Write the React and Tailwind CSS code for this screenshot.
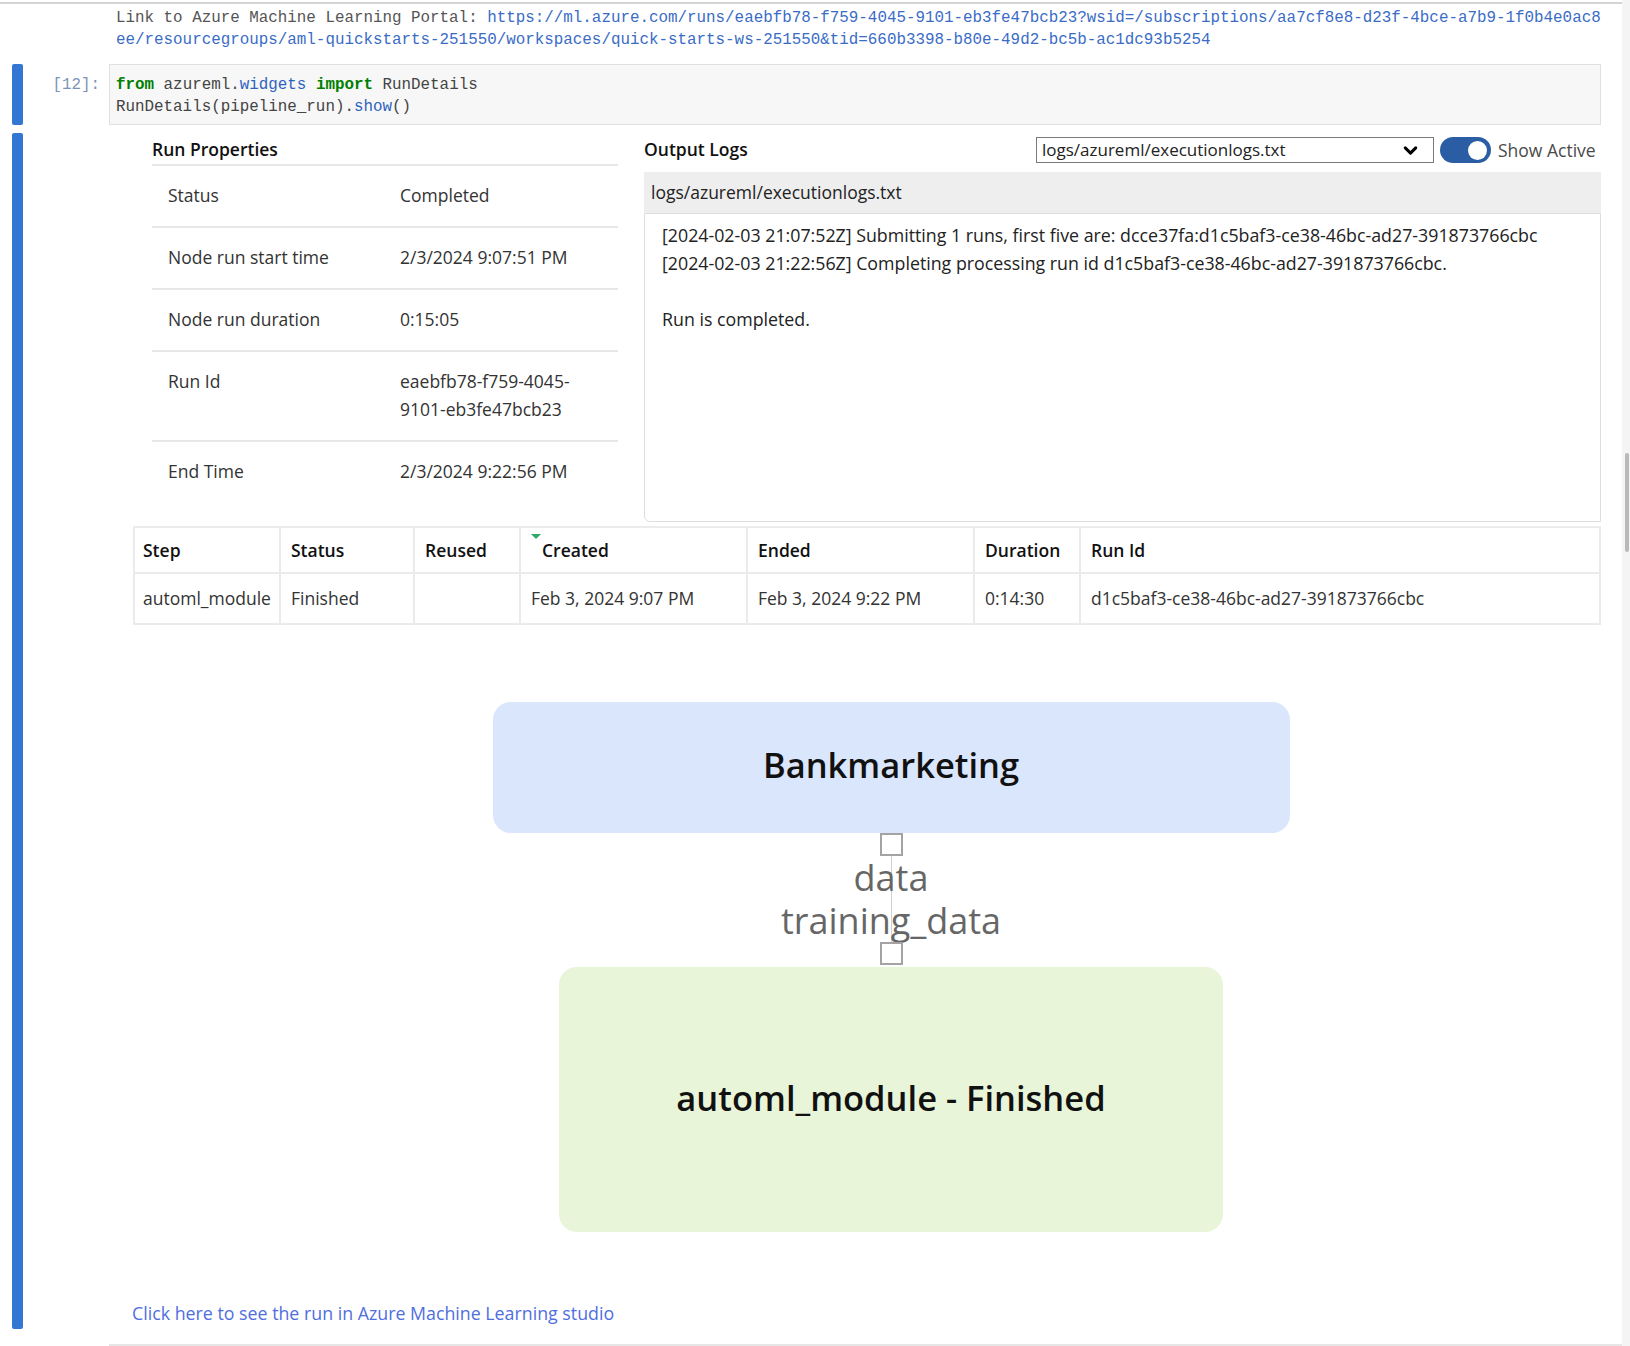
import React from 'react';
import { ChevronDown } from 'lucide-react';

const props = [
  { label: 'Status', value: 'Completed' },
  { label: 'Node run start time', value: '2/3/2024 9:07:51 PM' },
  { label: 'Node run duration', value: '0:15:05' },
  { label: 'Run Id', value: ['eaebfb78-f759-4045-', '9101-eb3fe47bcb23'] },
  { label: 'End Time', value: '2/3/2024 9:22:56 PM' },
];

const logLines = [
  '[2024-02-03 21:07:52Z] Submitting 1 runs, first five are: dcce37fa:d1c5baf3-ce38-46bc-ad27-391873766cbc',
  '[2024-02-03 21:22:56Z] Completing processing run id d1c5baf3-ce38-46bc-ad27-391873766cbc.',
  '',
  'Run is completed.',
];

const columns = ['Step', 'Status', 'Reused', 'Created', 'Ended', 'Duration', 'Run Id'];
const stepRow = ['automl_module', 'Finished', '', 'Feb 3, 2024 9:07 PM', 'Feb 3, 2024 9:22 PM', '0:14:30', 'd1c5baf3-ce38-46bc-ad27-391873766cbc'];

function PropRow({ label, value, last }) {
  return (
    <div className={`flex pt-[15px] pb-[17px] leading-[28px] ${last ? '' : 'border-b-2 border-[#e7e7e7]'}`}>
      <div className="w-[248px] pl-[16px]">{label}</div>
      <div className="flex-1">
        {Array.isArray(value) ? value.map((v) => <div key={v}>{v}</div>) : value}
      </div>
    </div>
  );
}

export default function App() {
  return (
    <div className="w-[1630px] h-[1346px] bg-white flex overflow-hidden font-['Open_Sans',sans-serif] text-[#333]">
      <div className="w-[1622px] flex flex-col">
        {/* top cell border */}
        <div className="mt-[2px] h-[2px] bg-[#d4d4d4]" />

        {/* stream output from previous cell */}
        <div className="pl-[116px] pt-[3px] font-['Liberation_Mono',monospace] text-[15.87px] leading-[22px] whitespace-pre text-[#555]">
          <div>
            Link to Azure Machine Learning Portal: <span className="text-[#3a6cc6]">https://ml.azure.com/runs/eaebfb78-f759-4045-9101-eb3fe47bcb23?wsid=/subscriptions/aa7cf8e8-d23f-4bce-a7b9-1f0b4e0ac8</span>
          </div>
          <div className="text-[#3a6cc6]">ee/resourcegroups/aml-quickstarts-251550/workspaces/quick-starts-ws-251550&amp;tid=660b3398-b80e-49d2-bc5b-ac1dc93b5254</div>
        </div>

        {/* code cell */}
        <div className="mt-[13px] flex items-start">
          <div className="ml-[12px] w-[11px] h-[61px] rounded-[2px] bg-[#3477d3]" />
          <div className="w-[86px] pt-[10px] pr-[9px] text-right font-['Liberation_Mono',monospace] text-[15.87px] leading-[22px] text-[#7d93b8]">
            [12]:
          </div>
          <div className="w-[1492px] h-[61px] border border-[#e0e0e0] bg-[#f7f7f7] pt-[9px] pl-[6px] font-['Liberation_Mono',monospace] text-[15.87px] leading-[22px] whitespace-pre text-[#444]">
            <div>
              <span className="font-bold text-[#008000]">from</span> azureml.<span className="text-[#2f63c0]">widgets</span> <span className="font-bold text-[#008000]">import</span> RunDetails
            </div>
            <div>
              RunDetails(pipeline_run).<span className="text-[#2f63c0]">show</span>()
            </div>
          </div>
        </div>

        {/* output cell */}
        <div className="mt-[8px] flex items-start">
          <div className="ml-[12px] w-[11px] h-[1196px] rounded-[2px] bg-[#3477d3]" />
          <div className="ml-[110px] w-[1468px] overflow-hidden flex flex-col text-[17.5px]">
            <div className="flex pt-[4px] h-[389px]">
              {/* run properties */}
              <div className="ml-[19px] w-[466px]">
                <div className="h-[27px] leading-[24px] font-semibold text-[#111] border-b-2 border-[#e7e7e7] box-content">
                  Run Properties
                </div>
                {props.map((p, i) => (
                  <PropRow key={p.label} label={p.label} value={p.value} last={i === props.length - 1} />
                ))}
              </div>

              {/* output logs */}
              <div className="ml-[26px] flex-1 flex flex-col">
                <div className="h-[27px] flex items-start">
                  <div className="leading-[24px] font-semibold text-[#111]">Output Logs</div>
                  <div className="ml-auto w-[398px] h-[26px] border border-[#7a7a7a] flex items-center pl-[5px] pr-[12px]">
                    <span className="flex-1 text-[17px] text-[#222]">logs/azureml/executionlogs.txt</span>
                    <ChevronDown size={21} strokeWidth={3.4} className="text-black" />
                  </div>
                  <div className="ml-[6px] w-[51px] h-[26px] rounded-full bg-[#2a5da3] flex items-center justify-end pr-[4px]">
                    <div className="w-[19px] h-[19px] rounded-full bg-white" />
                  </div>
                  <div className="w-[110px] pl-[7px] leading-[26px] text-[#4a4a4a]">Show Active</div>
                </div>
                <div className="mt-[8px] h-[41px] bg-[#eeeeee] pl-[7px] leading-[41px] text-[#222]">
                  logs/azureml/executionlogs.txt
                </div>
                <div className="h-[309px] border border-[#dddddd] rounded-bl-[6px] pt-[7px] pl-[17px] leading-[28px] text-[17.8px] text-[#222]">
                  {logLines.map((l, i) => (
                    <div key={i} className="h-[28px] whitespace-pre">{l}</div>
                  ))}
                </div>
              </div>
            </div>

            {/* step runs table */}
            <div className="mt-[4px] border-t-2 border-l-2 border-[#ebebeb]">
              <div className="grid grid-cols-[146px_134px_106px_227px_227px_106px_1fr] border-b-2 border-[#ebebeb] h-[46px] font-semibold text-[#111]">
                {columns.map((c) => (
                  <div key={c} className={`border-r-2 border-[#ebebeb] flex items-center ${c === 'Step' ? 'pl-[8px]' : 'pl-[10px]'}`}>
                    {c === 'Created' && (
                      <span className="self-start mt-[6px] mr-[1px] w-0 h-0 border-l-[5px] border-r-[5px] border-t-[5px] border-l-transparent border-r-transparent border-t-[#2fa866]" />
                    )}
                    {c}
                  </div>
                ))}
              </div>
              <div className="grid grid-cols-[146px_134px_106px_227px_227px_106px_1fr] border-b-2 border-[#ebebeb] h-[51px]">
                {stepRow.map((c, i) => (
                  <div key={i} className={`border-r-2 border-[#ebebeb] flex items-center text-[#333] ${i === 0 ? 'pl-[8px]' : 'pl-[10px]'}`}>
                    {c}
                  </div>
                ))}
              </div>
            </div>

            {/* pipeline graph */}
            <div className="mt-[77px] pl-[48px] flex flex-col items-center">
              <div className="w-[797px] h-[131px] pb-[5px] rounded-[18px] bg-[#dae6fb] flex items-center justify-center text-[34.5px] font-semibold text-[#111]">
                Bankmarketing
              </div>
              <div className="w-[23px] h-[23px] border-2 border-[#a3a3a3] bg-white" />
              <div className="bg-[linear-gradient(#cfcfcf,#cfcfcf)] bg-no-repeat bg-center bg-[length:1px_100%] text-center text-[36px] leading-[43px] text-[#666]">
                <div>data</div>
                <div>training_data</div>
              </div>
              <div className="w-[23px] h-[23px] border-2 border-[#a3a3a3] bg-white" />
              <div className="mt-[2px] w-[664px] h-[265px] pb-[3px] rounded-[18px] bg-[#e8f5d9] flex items-center justify-center text-[34.5px] font-semibold text-[#111]">
                automl_module - Finished
              </div>
            </div>

            <div className="mt-[69px] -ml-[1px] leading-[24px] text-[17.8px] text-[#4f6ee0]">
              Click here to see the run in Azure Machine Learning studio
            </div>
          </div>
        </div>

        <div className="mt-[15px] ml-[109px] h-[2px] bg-[#e6e6e6]" />
      </div>

      {/* window scrollbar */}
      <div className="w-[8px] bg-[#f4f4f4] flex flex-col">
        <div className="mt-[453px] ml-[3px] w-[4px] h-[99px] rounded-[2px] bg-[#b9b9b9]" />
      </div>
    </div>
  );
}
